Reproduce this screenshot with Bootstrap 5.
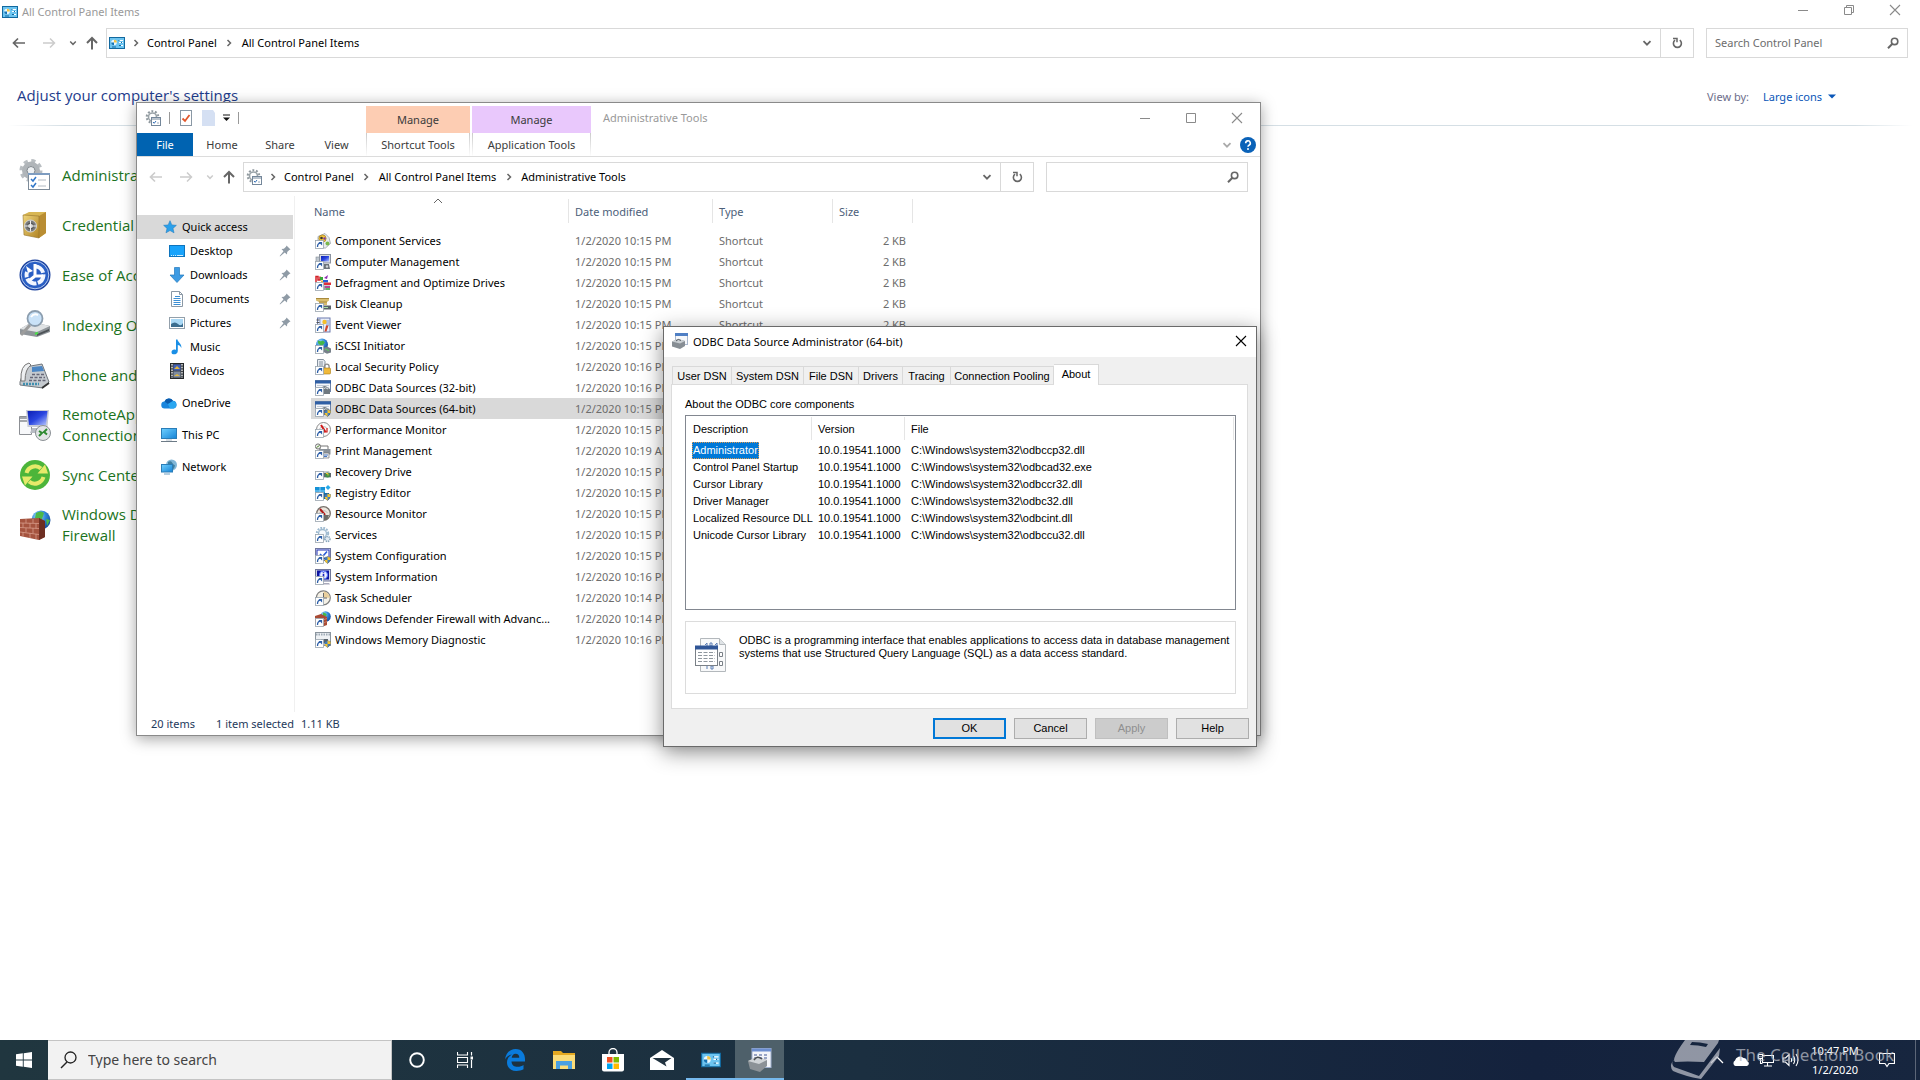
<!DOCTYPE html>
<html lang="en">
<head>
<meta charset="utf-8">
<meta name="viewport" content="width=device-width, initial-scale=1">
<title>All Control Panel Items</title>
<link href="https://cdn.jsdelivr.net/npm/bootstrap@5.3.0/dist/css/bootstrap.min.css" rel="stylesheet">
<style>
  :root { --ui: "Noto Sans", "Open Sans", sans-serif; --heading: "Open Sans", "Noto Sans", sans-serif; --classic: "Liberation Sans", Arial, sans-serif; }
  body { font-family: var(--ui); font-size: 11px; line-height: 16px; color: #000; background: #fff; overflow: hidden; }
  svg { display: block; flex: none; }
  a { text-decoration: none; color: inherit; }
  button { font: inherit; color: inherit; }
  .plain { border: 0; background: none; padding: 0; display: flex; align-items: center; justify-content: center; }
  .ic16 { width: 16px; height: 16px; }
  .ic32 { width: 32px; height: 32px; }

  /* shared window chrome */
  .cap-btn { width: 46px; height: 20px; color: #8a8a8a; }
  .addr { height: 30px; border: 1px solid #d9d9d9; background: #fff; padding-left: 2px; }
  .addr .crumb-sep { width: 25px; color: #666; display: flex; justify-content: center; }
  .addr svg + .crumb-sep { width: 22px; }
  .refresh { width: 33px; border-left: 1px solid #d9d9d9; color: #666; }
  .find { width: 202px; height: 30px; border: 1px solid #d9d9d9; padding: 0 8px; margin-left: 12px; }
  .find input { border: 0; outline: 0; padding: 0; background: none; min-width: 0; color: #6d6d6d; }
  .find input::placeholder { color: #6d6d6d; opacity: 1; }
  .navs { color: #666; }
  .nav-keys { gap: 13px; padding: 0 7px 0 12px; }
  .nav-keys .plain:nth-child(2) { margin-left: 3px; }
  .nav-keys .plain:last-child { margin-left: -5px; }
  .dim { color: #ccc; }

  /* control panel */
  .cp-title { height: 24px; color: #999; padding: 0 2px; }
  .cp-head { color: #1e3c8c; font-family: var(--heading); font-size: 15px; line-height: 20px; }
  .cp-bar { padding: 23px 0 0 17px; }
  .cp-rule { height: 1px; margin-top: 20px; background: linear-gradient(90deg, #fff, #d5dfe5 3%, #d5dfe5 97%, #fff); }
  .view-by { color: #6d6d8a; margin-right: 84px; gap: 0; }
  .view-by select { appearance: none; border: 0; background: none; color: #0a56b8; padding: 0; margin-left: 14px; font: inherit; width: 65px; }
  .cp-list { padding: 24px 0 0 19px; }
  .cp-item { height: 50px; gap: 11px; color: #1b7321; font-family: var(--heading); font-size: 15px; line-height: 21px; width: 220px; }

  /* explorer */
  .explorer { position: absolute; left: 136px; top: 102px; width: 1125px; height: 634px; background: #fff; border: 1px solid #8a8a8a; box-shadow: 0 3px 14px rgba(0,0,0,.36); }
  .caption-row { height: 30px; }
  .qat { width: 229px; padding-left: 8px; }
  .qat .vbar { width: 1px; height: 12px; background: #999; }
  .qat .doc { margin: 0 10px 0 2px; }
  .manage { height: 27px; align-self: flex-end; color: #3b3b3b; }
  .tint-short { background: #fdcdb3; } .tint-app { background: #e9c8fc; margin-left: 2px; }
  .w-short { width: 104px; } .w-app { width: 119px; }
  .ribbon { height: 24px; border-bottom: 1px solid #dcdcdc; color: #3b3b3b; }
  .ribbon a { display: flex; align-items: center; justify-content: center; width: 58px; }
  .ribbon a.file-tab { width: 56px; background: #0063b1; color: #fff; }
  .ribbon a.view-tab { width: 55px; margin-right: 2px; }
  .ribbon .ctx { border: solid; border-width: 0 1px; border-image: linear-gradient(#c8c8c8, #fff) 1; }
  .ribbon .ctx.w-short { width: 104px; } .ribbon .ctx.w-app { width: 119px; margin-left: 2px; }
  .addr-row { padding: 5px 12px 4px 0; }
  .side { width: 157px; padding-top: 19px; }
  .side a { height: 24px; display: flex; align-items: center; gap: 5px; padding-left: 24px; width: 156px; }
  .side a.sub { padding-left: 32px; padding-right: 2px; }
  .side a.top { margin-top: 8px; }
  .side a.here { background: #d9d9d9; padding-left: 26px; }
  .side-rule { width: 1px; background: #f0f0f0; margin-right: 16px; }
  .files { table-layout: fixed; width: 602px; border-collapse: separate; border-spacing: 0; margin-top: 3px; }
  .files th { height: 24px; font-weight: 400; color: #4c607a; border-right: 1px solid #e5e5e5; padding: 2px 6px 0; }
  .files th:first-child { padding-left: 3px; }
  .files td { height: 21px; padding: 0 7px 0 6px; color: #6d6d6d; white-space: nowrap; overflow: hidden; }
  .files td:first-child { color: #000; padding: 0 4px; }
  .files td:last-child { text-align: right; }
  .files .spacer td { height: 7px; }
  .files .picked td { background: #d9d9d9; }
  .sort { position: absolute; left: 296px; top: 95px; color: #666; }
  .status { height: 23px; padding-left: 14px; color: #1e395b; }
  .status span + span { margin-left: 21px; }
  .status span + span + span { margin-left: 7px; }

  /* odbc dialog */
  .odbc { position: absolute; left: 663px; top: 326px; width: 594px; height: 421px; background: #f0f0f0; border: 1px solid #6a6a6a; box-shadow: 0 5px 20px rgba(0,0,0,.45); font-family: var(--classic); font-size: 11px; line-height: 13px; }
  .odbc-title { height: 30px; background: #fff; font-family: var(--ui); padding: 0 9px 2px 8px; gap: 5px; }
  .odbc-body { padding: 7px 8px 0 7px; }
  .odbc-tabs { height: 20px; padding-left: 1px; }
  .odbc-tabs button { height: 18px; background: #f0f0f0; border: 1px solid #d9d9d9; border-width: 1px 1px 0 0; padding: 1px 0 0; }
  .odbc-tabs button:first-child { border-left-width: 1px; }
  .odbc-tabs button.active { height: 21px; margin-bottom: -1px; background: #fff; z-index: 1; padding: 0 0 2px; }
  .odbc-page { border: 1px solid #dcdcdc; background: #fff; padding: 13px 11px 14px 13px; height: 325px; }
  .odbc-page .caption { height: 17px; margin: 0; }
  .odbc-list { height: 195px; border: 1px solid #828790; padding: 1px; }
  .odbc-list table { table-layout: fixed; width: 547px; border-collapse: separate; border-spacing: 0; }
  .odbc-list th { font-weight: 400; height: 23px; border-right: 1px solid #e5e5e5; padding: 2px 6px 0; }
  .odbc-list td { height: 17px; padding: 0 0 0 6px; white-space: nowrap; }
  .odbc-list .spacer td { height: 2px; }
  .odbc-list .on { display: block; background: #0078d7; color: #fff; height: 17px; width: 67px; margin-left: -1px; padding: 2px 0 0 1px; outline: 1px dotted #e09a4f; outline-offset: -1px; }
  .odbc-note { height: 73px; border: 1px solid #dcdcdc; margin-top: 11px; padding: 12px 0 12px 9px; gap: 12px; }
  .odbc-note svg { margin-top: 4px; }
  .odbc-foot { gap: 8px; padding-top: 9px; margin-right: -1px; }
  .odbc-foot button { width: 73px; height: 21px; border: 1px solid #adadad; background: #e1e1e1; padding: 0; border-radius: 0; }
  .odbc-foot .primary { border: 2px solid #0078d7; }
  .odbc-foot button:disabled { background: #ccc; border-color: #bfbfbf; color: #8f8f8f; }

  /* taskbar */
  .tbar { height: 40px; background: linear-gradient(90deg, #20363f, #1b2f40 45%, #14223d 80%, #17263f); color: #fff; }
  .tbar .start { width: 48px; }
  .tbar .seek { width: 344px; background: #f2f2f2; border: 1px solid #c4c4c4; border-left: 0; padding-left: 12px; gap: 11px; color: #222; }
  .tbar .seek input { border: 0; outline: 0; background: none; padding: 0; font-size: 14px; }
  .tbar .seek input::placeholder { color: #444; opacity: 1; }
  .tbar .app { width: 49px; border-bottom: 2px solid transparent; padding-top: 2px; }
  .tbar .open { border-bottom-color: #76b9ed; }
  .tbar .front { background: #4e606a; }
  .tray { gap: 8px; padding-right: 4px; }
  .tray .clock { width: 56px; line-height: 19px; margin-right: 8px; }
  .tray .peek { width: 1px; height: 40px; background: #5c6678; margin-left: 12px; }
  .brand { position: absolute; right: 26px; bottom: 0; color: #b4b8c2; opacity: .75; height: 40px; font-size: 17px; pointer-events: none; gap: 14px; }
  .brand span { padding-bottom: 10px; }
</style>
<script src="https://cdn.jsdelivr.net/npm/bootstrap@5.3.0/dist/js/bootstrap.bundle.min.js"></script>
</head>
<body class="vh-100 d-flex flex-column position-relative">

<svg width="0" height="0" class="position-absolute" aria-hidden="true">
  <defs>
    <linearGradient id="gBlue" x1="0" y1="0" x2="1" y2="1"><stop offset="0" stop-color="#6fd0ff"/><stop offset="1" stop-color="#1583d6"/></linearGradient>
    <linearGradient id="gScr" x1="0" y1="0" x2="1" y2="1"><stop offset="0" stop-color="#0c1fb4"/><stop offset=".5" stop-color="#2a46e0"/><stop offset="1" stop-color="#b8c8ff"/></linearGradient>
    <linearGradient id="gGold" x1="0" y1="0" x2="1" y2="1"><stop offset="0" stop-color="#f0d67c"/><stop offset="1" stop-color="#b08324"/></linearGradient>
    <radialGradient id="gGlobe" cx=".35" cy=".3" r=".8"><stop offset="0" stop-color="#9fe0ff"/><stop offset=".5" stop-color="#2f86d8"/><stop offset="1" stop-color="#123f92"/></radialGradient>

    <symbol id="i-back" viewBox="0 0 14 14"><path d="M13 7H1.5M6 2.5 1.5 7 6 11.500" fill="none" stroke="currentColor" stroke-width="1.700"/></symbol>
    <symbol id="i-fwd" viewBox="0 0 14 14"><path d="M1 7h11.500M8 2.500 12.500 7 8 11.500" fill="none" stroke="currentColor" stroke-width="1.500"/></symbol>
    <symbol id="i-up" viewBox="0 0 14 14"><path d="M7 13.500V2M2 7l5-5 5 5" fill="none" stroke="currentColor" stroke-width="2"/></symbol>
    <symbol id="i-down" viewBox="0 0 10 10"><path d="M1.500 3.200 5 6.700 8.500 3.200" fill="none" stroke="currentColor" stroke-width="1.800"/></symbol>
    <symbol id="i-right" viewBox="0 0 8 8"><path d="M2.500 1 5.500 4 2.500 7" fill="none" stroke="currentColor" stroke-width="1.500"/></symbol>
    <symbol id="i-reload" viewBox="0 0 12 12"><path d="M8.800 3.200A4 4 0 1 1 4 3.200" fill="none" stroke="currentColor" stroke-width="1.600"/><path d="M2 1.500h4v3.700" fill="none" stroke="currentColor" stroke-width="1.500"/></symbol>
    <symbol id="i-find" viewBox="0 0 12 12"><circle cx="7.600" cy="4.400" r="3.200" fill="none" stroke="currentColor" stroke-width="1.600"/><path d="M5.400 6.800 1 11.200" stroke="currentColor" stroke-width="2"/></symbol>
    <symbol id="i-min" viewBox="0 0 12 12"><path d="M1 6.500h10" stroke="currentColor"/></symbol>
    <symbol id="i-max" viewBox="0 0 12 12"><path d="M1.500 1.500h9v9h-9z" fill="none" stroke="currentColor"/></symbol>
    <symbol id="i-restore" viewBox="0 0 12 12"><path d="M1.500 3.500h7v7h-7zM3.500 3.500v-2h7v7h-2" fill="none" stroke="currentColor"/></symbol>
    <symbol id="i-x" viewBox="0 0 12 12"><path d="M1 1l10 10M11 1 1 11" stroke="currentColor" stroke-width="1.100"/></symbol>
    <symbol id="i-cp" viewBox="0 0 16 12"><rect x=".5" y=".5" width="15" height="11" fill="#6cc4f0" stroke="#12699f"/><circle cx="5" cy="5.500" r="2.800" fill="#e8f7ff"/><path d="M5 5.500V2.700A2.800 2.800 0 0 1 7.800 5.500z" fill="#f5c542"/><path d="M5 5.500H2.200A2.800 2.800 0 0 0 5 8.300z" fill="#1374b5"/><path d="M10 3.500h4M10 5.500h4M10 8.500h4" stroke="#fff"/><path d="M9.500 3.500h1M12 5.500h1M10 8.500h2M3 10h4" stroke="#12699f"/></symbol>
    <symbol id="i-gear" viewBox="0 0 16 16"><circle cx="7.500" cy="7" r="5.800" fill="none" stroke="#8f989e" stroke-width="2" stroke-dasharray="1.900 1.744"/><circle cx="7.500" cy="7" r="4" fill="#fff" stroke="#9aa3a8" stroke-width="1.600"/><rect x="6.500" y="7.500" width="9" height="8" fill="#fff" stroke="#74879a"/><path d="M6.500 9h9" stroke="#74879a"/><path d="M8 12l1.200 1.300L11 11" fill="none" stroke="#2f6db5"/><path d="M12 13h2" stroke="#9ab"/></symbol>

    <symbol id="sc" viewBox="0 0 16 16"><rect x=".5" y="7.500" width="8" height="8" fill="#fff" stroke="#9aa5ae" stroke-width=".8"/><path d="M2.500 14c0-2.500 1-3.700 3-3.800" fill="none" stroke="#2b5ea8" stroke-width="1.300"/><path d="M3.500 9h3.600v3.600z" fill="#2b5ea8"/></symbol>
    <symbol id="shield" viewBox="0 0 16 16"><path d="M9.500 9.500q2-.2 3-1 1 .8 3 1 .3 4.500-3 6-3.300-1.500-3-6z" fill="#3f7fc4" stroke="#555" stroke-width=".5"/><path d="M12.500 8.500q1 .8 3 1l0 2.500h-3zM9.600 12h2.900v3.500q-2.500-1.200-2.900-3.500z" fill="#f4c430"/></symbol>
    <symbol id="f-comp" viewBox="0 0 16 16"><path d="M3 3.500 10 .5l4 4 1.500 6-5 4.500H3z" fill="#e8ebee" stroke="#8e969c" stroke-width=".7"/><circle cx="7.500" cy="5.500" r="3.600" fill="#f3c63a" stroke="#a57c11" stroke-width=".7"/><circle cx="6.500" cy="5" r="1.300" fill="#333"/><circle cx="9.500" cy="5.500" r="1.200" fill="#7b3ba8"/><circle cx="12.500" cy="10.500" r="2" fill="#79b84c"/><use href="#sc"/></symbol>
    <symbol id="f-mgmt" viewBox="0 0 16 16"><rect x="1" y="3" width="5" height="8" fill="#bfc7cf" stroke="#818b95" stroke-width=".6"/><rect x="4.500" y=".5" width="11" height="8.500" fill="#d8dce2" stroke="#8b93a0"/><rect x="6" y="2" width="8" height="5.500" fill="url(#gScr)"/><path d="M9 10h5l1 5H9z" fill="#6b737a"/><circle cx="12" cy="12.500" r="1.200" fill="#cfd4d8"/><use href="#sc"/></symbol>
    <symbol id="f-frag" viewBox="0 0 16 16"><path d="M1 7V1.500h2V5h2V1.500" fill="none" stroke="#d42027" stroke-width="1.500"/><path d="M5 2h3v3H5z" fill="#38a838"/><path d="M9 3l4-3-1 4z" fill="#8d2bb0"/><path d="M8 5h5v2.500H8z" fill="#2460d8"/><path d="M9 7.500h7V10H9z" fill="#e0303a"/><path d="M9 10.500h6V15H9z" fill="#9aa0a6"/><path d="M10 12h5" stroke="#c02b8c" stroke-width="1.500"/><path d="M11 14h4" stroke="#3bbf3b" stroke-width="1.200"/><path d="M6 5.500h2v2H6z" fill="#f1b637"/><use href="#sc"/></symbol>
    <symbol id="f-clean" viewBox="0 0 16 16"><path d="M1 2h13v2.500L12 6v3H4V6L1 4.500z" fill="#d9bd6e"/><path d="M1 2.500h13M4 6h8" stroke="#a98a3d"/><path d="M7 9.500h9v4H7z" fill="#5a6268"/><path d="M8 11.500h5" stroke="#a8e0a0"/><use href="#sc"/></symbol>
    <symbol id="f-event" viewBox="0 0 16 16"><rect x="2.500" y="1" width="12.500" height="14" fill="#e8eefb" stroke="#6c7bae"/><path d="M5 1v14" stroke="#8fa0cf"/><path d="M1.500 3h3M1.500 5.500h3" stroke="#555"/><path d="M8 4h6M11 6h3M11 8h3" stroke="#7d93cc"/><circle cx="9.500" cy="5" r="2.200" fill="#f4bf2a"/><path d="M11 8.500h2.500l-2 6H9.500z" fill="#d1452b"/><use href="#sc"/></symbol>
    <symbol id="f-iscsi" viewBox="0 0 16 16"><circle cx="7" cy="6.500" r="6" fill="url(#gGlobe)"/><path d="M3 2.500q3 1.500 5 0l2 2q-2 3.500-5 2.500-2.500-1-2-4.500z" fill="#43b649"/><path d="M8 10l4-1.500 4 2v4l-4 1.300-4-2z" fill="#77808a"/><path d="M10 11l4 1.500" stroke="#5bd35b"/><use href="#sc"/></symbol>
    <symbol id="f-sec" viewBox="0 0 16 16"><path d="M2.500.500h6l1.500 2v7H2.500z" fill="#e9edf2" stroke="#8592a0"/><path d="M4 3h4M4 5h4M4 7h4" stroke="#8592a0"/><path d="M9.500 9V7.500a2.300 2.300 0 0 1 4.600 0V9" fill="none" stroke="#8d8d8d" stroke-width="1.300"/><rect x="8" y="9" width="7.500" height="6" rx="1" fill="#f0b93a" stroke="#a97b13" stroke-width=".6"/><use href="#sc"/></symbol>
    <symbol id="f-odbc" viewBox="0 0 16 16"><rect x=".5" y=".5" width="15" height="11" fill="#f5f7fa" stroke="#6d83a8"/><path d="M0 2h16" stroke="#2f5fa5" stroke-width="3"/><path d="M2 5.500h12M2 7.500h12" stroke="#c2cbd8"/><path d="M6 8q4-4 7 0l2 1v5H8z" fill="#6f787f"/><path d="M8 9q3-2.500 5 0" fill="none" stroke="#e3e6e9"/></symbol>
    <symbol id="f-odbcsc" viewBox="0 0 16 16"><use href="#f-odbc"/><use href="#sc"/></symbol>
    <symbol id="f-odbcsh" viewBox="0 0 16 16"><use href="#f-odbc"/><use href="#shield"/><use href="#sc"/></symbol>
    <symbol id="f-box" viewBox="0 0 16 16"><rect x="3.500" y=".5" width="12" height="11" fill="#f5f7fa" stroke="#a9b6cc"/><path d="M3 1.500h13" stroke="#4f7fc4" stroke-width="3"/><path d="M0 8.500 6 6l7 2v5l-5 3-8-2.500z" fill="#878e94"/><path d="M0 8.500 6 6l7 2-5 2.500z" fill="#c9ced2"/><path d="M4 8q2-3 5-.5" fill="none" stroke="#555c62"/></symbol>
    <symbol id="f-perf" viewBox="0 0 16 16"><circle cx="8.500" cy="7.500" r="7" fill="#fbfbfb" stroke="#8b8b8b"/><path d="M4.500 7a4.500 4.500 0 0 1 8 0" fill="none" stroke="#bbb"/><path d="M6 3 10.500 10" stroke="#d01818" stroke-width="2"/><path d="M12 6v4h-3" fill="none" stroke="#d01818" stroke-width="1.200"/><use href="#sc"/></symbol>
    <symbol id="f-res" viewBox="0 0 16 16"><circle cx="8.500" cy="7.500" r="6.800" fill="#ece6dd" stroke="#77716a" stroke-width="1.300"/><path d="M4.500 7a4.500 4.500 0 0 1 8 0" fill="none" stroke="#bbb"/><path d="M5 3 10 9" stroke="#b01818" stroke-width="2"/><path d="M9 9h5l-2 5H9z" fill="#6d6a66"/><use href="#sc"/></symbol>
    <symbol id="f-print" viewBox="0 0 16 16"><path d="M5 3h8v4H5z" fill="#fff" stroke="#777"/><path d="M4 6h11.500v5.500H4z" fill="#8b9299"/><path d="M8 10h6v5H8z" fill="#f3f3f3" stroke="#777" stroke-width=".7"/><path d="M9 12h4M9 13.500h3" stroke="#4a78c0"/><circle cx="3" cy="3.500" r="2.600" fill="#eee" stroke="#777"/><path d="M1.500 4.500l3-2" stroke="#4f8a2a"/><use href="#sc"/></symbol>
    <symbol id="f-recov" viewBox="0 0 16 16"><path d="M2 7h12l2 3v4H0v-4z" fill="#c6cbd0"/><path d="M7 9h9v4H7z" fill="#5f676e"/><circle cx="12.500" cy="11" r="2.500" fill="#3f8f48"/><path d="M11 9.500h2v2" stroke="#f4c430" fill="none"/><use href="#sc"/></symbol>
    <symbol id="f-reg" viewBox="0 0 16 16"><path d="M0 2h10v8H0z" fill="#1591d6"/><path d="M5 2v8M0 6h10" stroke="#8ed0f5"/><path d="M13 0l2.500 2.500L13 5l-2.500-2.500z" fill="#27a9e8"/><path d="M8 8h6v6H8z" fill="#0c6fb0"/><use href="#shield"/><use href="#sc"/></symbol>
    <symbol id="f-serv" viewBox="0 0 16 16"><circle cx="7.500" cy="6.500" r="5.700" fill="none" stroke="#9db9cf" stroke-width="2" stroke-dasharray="1.800 1.200"/><circle cx="7.500" cy="6.500" r="4" fill="#f4f8fb" stroke="#9db9cf" stroke-width="1.300"/><circle cx="12.500" cy="12" r="2.500" fill="#e1ebf2" stroke="#8aa6bc" stroke-width="1.500" stroke-dasharray="1.300 .8"/><use href="#sc"/></symbol>
    <symbol id="f-conf" viewBox="0 0 16 16"><rect x=".5" y=".5" width="15" height="12" fill="#dfe2f0" stroke="#6f76a0"/><rect x="2" y="2" width="12" height="8.500" fill="#fff" stroke="#2233b5"/><path d="M5 6l2.500 2.500L12 3.500" fill="none" stroke="#2a5bd7" stroke-width="1.600"/><use href="#shield"/><use href="#sc"/></symbol>
    <symbol id="f-info" viewBox="0 0 16 16"><rect x=".5" y=".5" width="15" height="11.500" fill="#cfd3e2" stroke="#70779a"/><rect x="2" y="1.500" width="12" height="9" fill="#0d14a0"/><circle cx="8.500" cy="6" r="4" fill="#eef2ff" stroke="#5b79ff"/><path d="M8.500 3.200v1M8.500 5v3.500" stroke="#1420c0" stroke-width="1.600"/><path d="M8 14h6l1 1.500H8z" fill="#aab"/><use href="#sc"/></symbol>
    <symbol id="f-task" viewBox="0 0 16 16"><circle cx="8.300" cy="7.800" r="7" fill="#f5f1e6" stroke="#7f7f7f" stroke-width="1.200"/><path d="M8.500 7.800V1.500A6.300 6.300 0 0 1 14.600 7.800z" fill="#e9cf9c"/><path d="M8.500 3v5H12" fill="none" stroke="#666"/><use href="#sc"/></symbol>
    <symbol id="f-wall" viewBox="0 0 16 16"><circle cx="10.500" cy="5.500" r="5.300" fill="url(#gGlobe)"/><path d="M8 1.500q3 0 4 2.500-2 2-4 1z" fill="#46b84a"/><path d="M0 5l6-2 6 3v8l-4 1.500-8-2z" fill="#a94b34"/><path d="M1 7.500l7 1.500 4-1.500M1 10.500l7 1.500 4-1.500" fill="none" stroke="#d99a85" stroke-width=".6"/><use href="#sc"/></symbol>
    <symbol id="f-mem" viewBox="0 0 16 16"><rect x=".5" y=".5" width="15" height="13" fill="#eef1f4" stroke="#8b959e"/><path d="M1 2.500h14" stroke="#9fabb6" stroke-width="2" stroke-dasharray="1.500 1"/><path d="M6 7h7v4H6z" fill="#59636b"/><use href="#shield"/><use href="#sc"/></symbol>

    <symbol id="s-star" viewBox="0 0 16 16"><path d="M8 .8l2.100 4.800 5.200.5-3.900 3.500 1.200 5.100L8 12l-4.600 2.700 1.200-5.100L.7 6.100l5.200-.5z" fill="#2ba0ea" stroke="#1a78bd" stroke-width=".6"/></symbol>
    <symbol id="s-desk" viewBox="0 0 16 16"><rect x=".5" y="2.500" width="15" height="11" fill="#18a3fb" stroke="#0e74bd"/><path d="M2 12.500h1M4 12.500h1M6 12.500h1M8 12.500h6" stroke="#fff" stroke-width=".8"/></symbol>
    <symbol id="s-dl" viewBox="0 0 16 16"><path d="M5.500.500h5v7.500h4.500L8 15.500 1 8h4.500z" fill="#3d9be3" stroke="#2178bd" stroke-width=".7"/></symbol>
    <symbol id="s-doc" viewBox="0 0 16 16"><path d="M2.500.500h8l3 3v12h-11z" fill="#fff" stroke="#8a98a5"/><path d="M10.500.500v3h3" fill="none" stroke="#8a98a5"/><path d="M4.500 7.500h7M4.500 9.500h7M4.500 11.500h7M4.500 13.500h7M6 5.500h5" stroke="#3c8fd4"/></symbol>
    <symbol id="s-pic" viewBox="0 0 16 16"><rect x=".5" y="2.500" width="15" height="11" fill="#fff" stroke="#93a0ab"/><rect x="2" y="4" width="12" height="8" fill="#a9d8f5"/><path d="M2 9q4-3 7 0t5-1v4H2z" fill="#3b6d8f"/></symbol>
    <symbol id="s-mus" viewBox="0 0 16 16"><path d="M7 .5h1.500c.3 3 4.500 4 3.800 8.500-.8-2-2-2.800-3.500-3V12c0 4-6.300 4.500-6.300 1.200C2.500 11 5 10 7 11z" fill="#1a8fe6"/></symbol>
    <symbol id="s-vid" viewBox="0 0 16 16"><rect x="1.500" y=".5" width="13" height="15" fill="#3e4348" stroke="#23272a"/><path d="M3 1v14M13 1v14" stroke="#fff" stroke-width="1.200" stroke-dasharray="1.500 1.200"/><rect x="4.500" y="1.500" width="7" height="6" fill="#3f5fb8"/><rect x="4.500" y="8.500" width="7" height="6" fill="#7d8ba0"/><path d="M5 6l3-3 3 3zM5 13l3-2 3 2z" fill="#e0b640"/></symbol>
    <symbol id="s-one" viewBox="0 0 16 16"><path d="M4 13.500a3.500 3.500 0 0 1-.5-7A4.800 4.800 0 0 1 12 5.800a3.900 3.900 0 0 1 .5 7.700z" fill="#1a86dd"/><path d="M3.500 6.500A4.800 4.800 0 0 1 12 5.800L7 9z" fill="#0b5cad"/><path d="M12 5.900a3.900 3.900 0 0 1 .5 7.600H9L7 9z" fill="#2aa6f0"/></symbol>
    <symbol id="s-pc" viewBox="0 0 16 16"><rect x=".5" y="1.500" width="15" height="10" fill="url(#gBlue)" stroke="#2a7db8"/><path d="M0 14.500h16" stroke="#6c7a86"/><path d="M5 13h6" stroke="#b3c0ca"/></symbol>
    <symbol id="s-net" viewBox="0 0 16 16"><circle cx="10.500" cy="6" r="5.500" fill="#7fb6d8"/><path d="M7 3q3-1.500 4 .5t3 3q-1 4-3 4-1-4-4-4z" fill="#3f7f9f"/><rect x=".5" y="5.500" width="11" height="7.500" fill="url(#gBlue)" stroke="#2a7db8"/><path d="M3 15h6" stroke="#6c9ec2"/></symbol>
    <symbol id="s-pin" viewBox="0 0 12 12"><path d="M7.500.500 11.500 4.500 10.300 5 8.200 7.100 8 9.500 5.700 7.500 1 11.500.700 11 4.500 6.300 2.500 4l2.400-.2L7 1.700z" fill="#8f9ba6"/></symbol>

    <symbol id="c-adm" viewBox="0 0 32 32"><circle cx="12" cy="11.500" r="9.500" fill="none" stroke="#b9bec2" stroke-width="4" stroke-dasharray="4 3.460"/><circle cx="12" cy="11.500" r="6.500" fill="#f1f3f4" stroke="#b0b5b9" stroke-width="5"/><circle cx="12" cy="11.500" r="4" fill="#eef1f3" stroke="#7f868c"/><rect x="9.500" y="14.500" width="21" height="16" fill="#fff" stroke="#7d8b99"/><path d="M9 15h22" stroke="#7d9cc0" stroke-width="2"/><path d="M12 20l2 2 3-4M12 26l2 2 3-4" fill="none" stroke="#3277c8" stroke-width="1.500"/><path d="M19 21h8M19 27h8" stroke="#b2bac2"/></symbol>
    <symbol id="c-cred" viewBox="0 0 32 32"><path d="M4 6 10 3h17v21l-7 5z" fill="#d8b653"/><path d="M20 7l7-4v21l-7 5z" fill="#b98d33"/><path d="M4 6l16 1v22L5 26z" fill="url(#gGold)" stroke="#93722b" stroke-width=".6"/><circle cx="11.500" cy="17" r="6" fill="#77797a" stroke="#d6d6d6"/><circle cx="11.500" cy="17" r="3" fill="#c3c6c8" stroke="#444"/><path d="M11.500 11.500v11M6 17h11" stroke="#eee"/></symbol>
    <symbol id="c-ease" viewBox="0 0 32 32"><circle cx="16" cy="16" r="15.500" fill="#1d439f"/><circle cx="16" cy="16" r="13.800" fill="#2a5fc4" stroke="#b9cdf2"/><path d="M16 7.500A8.500 8.500 0 1 1 8 13" fill="none" stroke="#f2f6ff" stroke-width="4" stroke-dasharray="11 1.500"/><path d="M16 5v12h8M16 17l-5 4" fill="none" stroke="#fff" stroke-width="3"/><path d="M7 7l7 5-5 2z" fill="#fff"/></symbol>
    <symbol id="c-index" viewBox="0 0 32 32"><path d="M1 20 13 13l18 4v6l-13 5L1 25z" fill="#8e9499"/><path d="M1 20 13 13l18 4-13 6z" fill="#dfe2e4"/><path d="M18 25l12-5v2l-12 5z" fill="#4d5357"/><path d="M16 25l3-1.200" stroke="#4ade4a" stroke-width="2"/><path d="M11 16 2 26" stroke="#9c9c9c" stroke-width="3"/><circle cx="16" cy="9.500" r="7.500" fill="#c9e2f8" stroke="#8b9dae" stroke-width="1.800"/><path d="M12 8q3-4 7-2" fill="none" stroke="#fff" stroke-width="2"/></symbol>
    <symbol id="c-phone" viewBox="0 0 32 32"><path d="M1 23 6 8l17-3 7 18-6 6-23-3z" fill="#c5cacf" stroke="#70777d"/><path d="M13 8l10-1 2 5-12 1z" fill="#4b86c4"/><path d="M13 15.500h12M11 18.500h15M10 21.500h17" stroke="#667" stroke-width="1.500" stroke-dasharray="3 1.500"/><path d="M2 22Q1 6 10 4l2 2q-6 4-6 16z" fill="#eef0f2" stroke="#777"/><path d="M4 25h16" stroke="#3f8fb0" stroke-width="2.500" stroke-dasharray="2 1"/><path d="M23 29l7-5" stroke="#333" stroke-width="2"/></symbol>
    <symbol id="c-remote" viewBox="0 0 32 32"><path d="M.5 7.500h12v18H.5z" fill="#f7f8fa" stroke="#8c8f94"/><path d="M1 9h11M1 12h8" stroke="#4e545c"/><path d="M7 1h23l-1.500 17H8.500z" fill="#c9ccd6"/><path d="M8.500 2h20l-1.500 14H10z" fill="url(#gScr)"/><path d="M13 19h9l2 5H11z" fill="#b8bcc4"/><circle cx="24" cy="24" r="7.500" fill="#e2e5e7" stroke="#8a9094"/><path d="M20 22l3 2-3 3M28 20l-3 3 3 2.500" fill="none" stroke="#2e8a32" stroke-width="2"/></symbol>
    <symbol id="c-sync" viewBox="0 0 32 32"><circle cx="16" cy="16" r="15" fill="#4cb53a"/><path d="M7.500 14A9 9 0 0 1 22 9.500M24.500 18A9 9 0 0 1 10 22.500" fill="none" stroke="#e6ea6a" stroke-width="4"/><path d="M18.500 14.500h10.500l-3-9zM3 17.500h10.500L6 26.500z" fill="#e6ea6a"/></symbol>
    <symbol id="c-wall" viewBox="0 0 32 32"><circle cx="22" cy="11" r="9.500" fill="url(#gGlobe)"/><path d="M17 4q5-3 8 0l-2 6q-5 2-7-1zM27 10l4 1-3 6z" fill="#4cb848"/><path d="M1 10l19-1 6 3v16l-6 3-19-4z" fill="#a5543f"/><path d="M20 9l6 3v16l-6 3z" fill="#6e2f22"/><path d="M1 14l19 .500M1 18.500l19 1M1 23l19 2.500M7 10v4M14 10v4M4 14v4.500M11 14v5M17 14.500v5M7 19v4.500M14 19v5.500M4 23v4.500M11 24v5M17 25v5" stroke="#d79c8a" stroke-width=".8"/></symbol>
    <symbol id="d-odbc" viewBox="0 0 32 34"><path d="M5.500.500h19l6 6v27h-25z" fill="#f8f9fa" stroke="#b3b8bc"/><path d="M24.500.500v6h6" fill="#dfe3e6" stroke="#b3b8bc"/><path d="M10 7l2-2v3M15 5h2v3h-2zM20 7l2-2v3M12 28v3M16 28h2v3h-2z" fill="none" stroke="#5c7fb5"/><path d="M24.500 14.500h3v4h-3zM24.500 23.500h3v4h-3z" fill="#fff" stroke="#7a8087"/><rect x=".5" y="8.500" width="22" height="19" fill="#fff" stroke="#7a8087"/><path d="M0 9.500h23" stroke="#2f5596" stroke-width="4"/><path d="M3 14.500h17M3 17.500h17M3 20.500h17M3 23.500h17" stroke="#8f979e" stroke-dasharray="4 1.500"/></symbol>
  </defs>
</svg>

<!-- Control Panel window -->
<main class="flex-grow-1 overflow-hidden">
  <header class="cp-title d-flex align-items-start">
    <div class="d-flex align-items-center gap-1 pt-1 flex-grow-1"><svg width="16" height="12"><use href="#i-cp"/></svg><span>All Control Panel Items</span></div>
    <button class="plain cap-btn" aria-label="Minimize"><svg width="12" height="12"><use href="#i-min"/></svg></button>
    <button class="plain cap-btn" aria-label="Restore"><svg width="12" height="12"><use href="#i-restore"/></svg></button>
    <button class="plain cap-btn" aria-label="Close"><svg width="12" height="12"><use href="#i-x"/></svg></button>
  </header>
  <div class="d-flex align-items-center pt-1 pe-2">
    <div class="navs nav-keys d-flex align-items-center">
      <button class="plain" aria-label="Back"><svg width="14" height="14"><use href="#i-back"/></svg></button>
      <button class="plain dim" aria-label="Forward"><svg width="14" height="14"><use href="#i-fwd"/></svg></button>
      <button class="plain" aria-label="Recent"><svg width="8" height="8"><use href="#i-down"/></svg></button>
      <button class="plain" aria-label="Up"><svg width="14" height="14"><use href="#i-up"/></svg></button>
    </div>
    <nav class="addr d-flex align-items-center flex-grow-1" aria-label="Address">
      <svg width="16" height="12"><use href="#i-cp"/></svg>
      <span class="crumb-sep"><svg width="8" height="8"><use href="#i-right"/></svg></span><a href="#">Control Panel</a>
      <span class="crumb-sep"><svg width="8" height="8"><use href="#i-right"/></svg></span><a href="#">All Control Panel Items</a>
      <button class="plain ms-auto me-1 px-1 navs" aria-label="Previous locations"><svg width="10" height="10"><use href="#i-down"/></svg></button>
      <button class="plain refresh h-100" aria-label="Refresh"><svg width="12" height="12"><use href="#i-reload"/></svg></button>
    </nav>
    <label class="find d-flex align-items-center me-1"><input class="flex-grow-1" type="search" placeholder="Search Control Panel" aria-label="Search Control Panel"><span class="navs"><svg width="12" height="12"><use href="#i-find"/></svg></span></label>
  </div>
  <div class="cp-bar d-flex justify-content-between align-items-center">
    <h1 class="cp-head mb-0 mt-1">Adjust your computer's settings</h1>
    <label class="view-by d-flex align-items-center mt-2">View by:
      <select aria-label="View by"><option>Large icons</option></select>
      <svg width="8" height="8"><path d="M0 1.500h8L4 5.500z" fill="#0a56b8"/></svg></label>
  </div>
  <div class="cp-rule mx-2"></div>
  <nav class="cp-list" aria-label="Control Panel items">
    <a class="cp-item d-flex align-items-center" href="#"><svg class="ic32"><use href="#c-adm"/></svg>Administrative Tools</a>
    <a class="cp-item d-flex align-items-center" href="#"><svg class="ic32"><use href="#c-cred"/></svg>Credential Manager</a>
    <a class="cp-item d-flex align-items-center" href="#"><svg class="ic32"><use href="#c-ease"/></svg>Ease of Access Center</a>
    <a class="cp-item d-flex align-items-center" href="#"><svg class="ic32"><use href="#c-index"/></svg>Indexing Options</a>
    <a class="cp-item d-flex align-items-center" href="#"><svg class="ic32"><use href="#c-phone"/></svg>Phone and Modem</a>
    <a class="cp-item d-flex align-items-center" href="#"><svg class="ic32"><use href="#c-remote"/></svg>RemoteApp and Desktop Connections</a>
    <a class="cp-item d-flex align-items-center" href="#"><svg class="ic32"><use href="#c-sync"/></svg>Sync Center</a>
    <a class="cp-item d-flex align-items-center" href="#"><svg class="ic32"><use href="#c-wall"/></svg>Windows Defender Firewall</a>
  </nav>
</main>

<!-- Administrative Tools window -->
<section class="explorer d-flex flex-column" aria-label="Administrative Tools">
  <header class="caption-row d-flex align-items-center">
    <div class="qat d-flex align-items-center">
      <svg class="ic16"><use href="#i-gear"/></svg><span class="vbar ms-2 me-2"></span>
      <button class="plain doc" aria-label="Properties"><svg width="12" height="16"><rect x=".5" y=".5" width="11" height="15" fill="#fff" stroke="#8a98a5"/><path d="M2.500 8.500l2.500 2.500L9.500 5" fill="none" stroke="#e2572b" stroke-width="1.800"/></svg></button>
      <button class="plain me-2" aria-label="New folder"><svg width="13" height="16"><path d="M0 0h11l2 3v13H0z" fill="#d5e0f3"/></svg></button>
      <button class="plain me-2" aria-label="Customize"><svg width="7" height="8"><path d="M0 1h7" stroke="#111"/><path d="M0 3.500h7L3.500 7z" fill="#111"/></svg></button>
      <span class="vbar"></span>
    </div>
    <div class="manage tint-short w-short d-flex align-items-center justify-content-center">Manage</div>
    <div class="manage tint-app w-app d-flex align-items-center justify-content-center">Manage</div>
    <span class="ms-2 ps-1 flex-grow-1" style="color:#999">Administrative Tools</span>
    <button class="plain cap-btn" aria-label="Minimize"><svg width="12" height="12"><use href="#i-min"/></svg></button>
    <button class="plain cap-btn" aria-label="Maximize"><svg width="12" height="12"><use href="#i-max"/></svg></button>
    <button class="plain cap-btn" aria-label="Close"><svg width="12" height="12"><use href="#i-x"/></svg></button>
  </header>
  <nav class="ribbon d-flex" aria-label="Ribbon">
    <a href="#" class="file-tab">File</a>
    <a href="#">Home</a><a href="#">Share</a><a href="#" class="view-tab">View</a>
    <a href="#" class="ctx w-short">Shortcut Tools</a>
    <a href="#" class="ctx w-app">Application Tools</a>
    <button class="plain ms-auto me-2" style="color:#aaa" aria-label="Expand ribbon"><svg width="10" height="10"><use href="#i-down"/></svg></button>
    <button class="plain me-1" aria-label="Help"><svg width="16" height="16"><circle cx="8" cy="8" r="8" fill="#0a62b8"/><path d="M5.700 6.200a2.300 2.300 0 1 1 3.300 2q-1 .5-1 1.600" fill="none" stroke="#fff" stroke-width="1.600"/><circle cx="8" cy="12" r="1" fill="#fff"/></svg></button>
  </nav>
  <div class="addr-row d-flex align-items-center">
    <div class="navs nav-keys d-flex align-items-center">
      <button class="plain dim" aria-label="Back"><svg width="14" height="14"><use href="#i-back"/></svg></button>
      <button class="plain dim" aria-label="Forward"><svg width="14" height="14"><use href="#i-fwd"/></svg></button>
      <button class="plain dim" aria-label="Recent"><svg width="8" height="8"><use href="#i-down"/></svg></button>
      <button class="plain" aria-label="Up"><svg width="14" height="14"><use href="#i-up"/></svg></button>
    </div>
    <nav class="addr d-flex align-items-center flex-grow-1" aria-label="Address">
      <svg class="ic16"><use href="#i-gear"/></svg>
      <span class="crumb-sep"><svg width="8" height="8"><use href="#i-right"/></svg></span><a href="#">Control Panel</a>
      <span class="crumb-sep"><svg width="8" height="8"><use href="#i-right"/></svg></span><a href="#">All Control Panel Items</a>
      <span class="crumb-sep"><svg width="8" height="8"><use href="#i-right"/></svg></span><a href="#">Administrative Tools</a>
      <button class="plain ms-auto me-1 px-1 navs" aria-label="Previous locations"><svg width="10" height="10"><use href="#i-down"/></svg></button>
      <button class="plain refresh h-100" aria-label="Refresh"><svg width="12" height="12"><use href="#i-reload"/></svg></button>
    </nav>
    <label class="find d-flex align-items-center"><input class="flex-grow-1" type="search" aria-label="Search Administrative Tools"><span class="navs"><svg width="12" height="12"><use href="#i-find"/></svg></span></label>
  </div>
  <div class="d-flex flex-grow-1">
    <nav class="side" aria-label="Folders">
      <a class="here" href="#"><svg width="14" height="14"><use href="#s-star"/></svg>Quick access</a>
      <a class="sub" href="#"><svg class="ic16"><use href="#s-desk"/></svg>Desktop<svg class="ms-auto" width="12" height="12"><use href="#s-pin"/></svg></a>
      <a class="sub" href="#"><svg class="ic16"><use href="#s-dl"/></svg>Downloads<svg class="ms-auto" width="12" height="12"><use href="#s-pin"/></svg></a>
      <a class="sub" href="#"><svg class="ic16"><use href="#s-doc"/></svg>Documents<svg class="ms-auto" width="12" height="12"><use href="#s-pin"/></svg></a>
      <a class="sub" href="#"><svg class="ic16"><use href="#s-pic"/></svg>Pictures<svg class="ms-auto" width="12" height="12"><use href="#s-pin"/></svg></a>
      <a class="sub" href="#"><svg class="ic16"><use href="#s-mus"/></svg>Music</a>
      <a class="sub" href="#"><svg class="ic16"><use href="#s-vid"/></svg>Videos</a>
      <a class="top" href="#"><svg class="ic16"><use href="#s-one"/></svg>OneDrive</a>
      <a class="top" href="#"><svg class="ic16"><use href="#s-pc"/></svg>This PC</a>
      <a class="top" href="#"><svg class="ic16"><use href="#s-net"/></svg>Network</a>
    </nav>
    <div class="side-rule"></div>
    <div>
      <table class="files">
        <colgroup><col style="width:258px"><col style="width:144px"><col style="width:120px"><col style="width:80px"></colgroup>
        <thead><tr><th scope="col">Name</th><th scope="col">Date modified</th><th scope="col">Type</th><th scope="col">Size</th></tr></thead>
        <tbody id="rows">
          <tr class="spacer" aria-hidden="true"><td colspan="4"></td></tr>
        </tbody>
      </table>
    </div>
  </div>
  <svg class="sort" width="10" height="6" aria-hidden="true"><path d="M1 5l4-4 4 4" fill="none" stroke="currentColor"/></svg>
  <footer class="status d-flex align-items-center"><span>20 items</span><span>1 item selected</span><span>1.11 KB</span></footer>
</section>
<script>
  const files = [
    ['comp', 'Component Services', '10:15 PM'], ['mgmt', 'Computer Management', '10:15 PM'],
    ['frag', 'Defragment and Optimize Drives', '10:15 PM'], ['clean', 'Disk Cleanup', '10:15 PM'],
    ['event', 'Event Viewer', '10:15 PM'], ['iscsi', 'iSCSI Initiator', '10:15 PM'],
    ['sec', 'Local Security Policy', '10:16 PM'], ['odbcsc', 'ODBC Data Sources (32-bit)', '10:16 PM'],
    ['odbcsh', 'ODBC Data Sources (64-bit)', '10:15 PM'], ['perf', 'Performance Monitor', '10:15 PM'],
    ['print', 'Print Management', '10:19 AM'], ['recov', 'Recovery Drive', '10:15 PM'],
    ['reg', 'Registry Editor', '10:15 PM'], ['res', 'Resource Monitor', '10:15 PM'],
    ['serv', 'Services', '10:15 PM'], ['conf', 'System Configuration', '10:15 PM'],
    ['info', 'System Information', '10:16 PM'], ['task', 'Task Scheduler', '10:14 PM'],
    ['wall', 'Windows Defender Firewall with Advanc...', '10:14 PM'], ['mem', 'Windows Memory Diagnostic', '10:16 PM']
  ];
  document.getElementById('rows').insertAdjacentHTML('beforeend', files.map(([icon, name, time], i) =>
    `<tr class="${i === 8 ? 'picked' : ''}"><td><div class="d-flex align-items-center gap-1"><svg class="ic16"><use href="#f-${icon}"/></svg>${name}</div></td><td>1/2/2020 ${time}</td><td>Shortcut</td><td>2 KB</td></tr>`).join(''));
</script>

<!-- ODBC dialog -->
<section class="odbc" role="dialog" aria-labelledby="odbcName">
  <header class="odbc-title d-flex align-items-center">
    <svg class="ic16"><use href="#f-box"/></svg><span id="odbcName" class="flex-grow-1">ODBC Data Source Administrator (64-bit)</span>
    <button class="plain text-black" aria-label="Close"><svg width="12" height="12"><use href="#i-x"/></svg></button>
  </header>
  <div class="odbc-body">
    <div class="odbc-tabs d-flex align-items-end" role="tablist">
      <button role="tab" style="width:60px">User DSN</button><button role="tab" style="width:72px">System DSN</button><button role="tab" style="width:55px">File DSN</button><button role="tab" style="width:44px">Drivers</button><button role="tab" style="width:48px">Tracing</button><button role="tab" style="width:103px">Connection Pooling</button><button role="tab" class="active" style="width:45px" aria-selected="true">About</button>
    </div>
    <div class="odbc-page" role="tabpanel">
      <p class="caption">About the ODBC core components</p>
      <div class="odbc-list">
        <table>
          <colgroup><col style="width:125px"><col style="width:93px"><col></colgroup>
          <thead><tr><th scope="col">Description</th><th scope="col">Version</th><th scope="col">File</th></tr></thead>
          <tbody>
            <tr class="spacer" aria-hidden="true"><td colspan="3"></td></tr>
            <tr><td><span class="on">Administrator</span></td><td>10.0.19541.1000</td><td>C:\Windows\system32\odbccp32.dll</td></tr>
            <tr><td>Control Panel Startup</td><td>10.0.19541.1000</td><td>C:\Windows\system32\odbcad32.exe</td></tr>
            <tr><td>Cursor Library</td><td>10.0.19541.1000</td><td>C:\Windows\system32\odbccr32.dll</td></tr>
            <tr><td>Driver Manager</td><td>10.0.19541.1000</td><td>C:\Windows\system32\odbc32.dll</td></tr>
            <tr><td>Localized Resource DLL</td><td>10.0.19541.1000</td><td>C:\Windows\system32\odbcint.dll</td></tr>
            <tr><td>Unicode Cursor Library</td><td>10.0.19541.1000</td><td>C:\Windows\system32\odbccu32.dll</td></tr>
          </tbody>
        </table>
      </div>
      <div class="odbc-note d-flex align-items-start">
        <svg width="32" height="34"><use href="#d-odbc"/></svg>
        <p class="mb-0">ODBC is a programming interface that enables applications to access data in database management systems that use Structured Query Language (SQL) as a data access standard.</p>
      </div>
    </div>
    <div class="odbc-foot d-flex justify-content-end">
      <button class="primary">OK</button><button>Cancel</button><button disabled>Apply</button><button>Help</button>
    </div>
  </div>
</section>

<!-- Taskbar -->
<footer class="tbar d-flex align-items-stretch position-relative">
  <button class="plain start" aria-label="Start"><svg width="16" height="16"><path d="M0 2.300 6.800 1.300v6.200H0zM7.700 1.200 16 0v7.500H7.700zM0 8.400h6.800v6.300L0 13.700zM7.700 8.400H16V16l-8.300-1.200z" fill="#fff"/></svg></button>
  <label class="seek d-flex align-items-center"><svg width="17" height="18"><circle cx="10.500" cy="6.500" r="5.500" fill="none" stroke="#222" stroke-width="1.300"/><path d="M7 11 1 17" stroke="#222" stroke-width="1.400"/></svg><input type="search" placeholder="Type here to search" aria-label="Type here to search"></label>
  <button class="plain app" aria-label="Cortana"><svg width="16" height="16"><circle cx="8" cy="8" r="6.800" fill="none" stroke="#fff" stroke-width="1.900"/></svg></button>
  <button class="plain app" aria-label="Task View"><svg width="17" height="16"><path d="M.5 0v3h10V0M.500 16v-3h10v3M.500 5.500h10v5H.500z" fill="none" stroke="#fff" stroke-width="1.100"/><path d="M14.500 0v3.500M14.500 8v8" stroke="#fff" stroke-width="1.200"/><path d="M13.500 4.500h2.500v3h-2.500z" fill="#fff"/></svg></button>
  <button class="plain app" aria-label="Edge"><svg width="20" height="22"><path d="M0 10.500C1 4 5 0 10.500 0 17 0 20 5 20 10v2.500H6.500c.3 4 3 5.300 6 5.300 2.500 0 4.500-.8 6-1.800v4.300C16.500 21.500 14 22 11.500 22 5 22 2 17.500 2 13.500c0-3.500 2-6.500 5-8C4 6 1.500 7.500 0 10.500zM6.700 8.800h7.600c0-2.500-1.300-4-3.700-4S7 6.500 6.700 8.800z" fill="#0a7bdc" fill-rule="evenodd"/></svg></button>
  <button class="plain app" aria-label="File Explorer"><svg width="22" height="18"><path d="M0 0h8l2 2h12v16H0z" fill="#e5a921"/><path d="M0 4h22v14H0z" fill="#fbdc78"/><path d="M3 18V10h16v8h-4v-3.500H7V18z" fill="#4aa0e2"/></svg></button>
  <button class="plain app" aria-label="Store"><svg width="24" height="24"><path d="M8 7V4.500a4 4 0 0 1 8 0V7" fill="none" stroke="#fff" stroke-width="1.300"/><path d="M1 6h22v15.500a2 2 0 0 1-2 2H3a2 2 0 0 1-2-2z" fill="#fff"/><path d="M6 9h5.500v5.500H6z" fill="#f25022"/><path d="M12.500 9H18v5.500h-5.500z" fill="#7fba00"/><path d="M6 15.500h5.500V21H6z" fill="#00a4ef"/><path d="M12.500 15.500H18V21h-5.500z" fill="#ffb900"/></svg></button>
  <button class="plain app" aria-label="Mail"><svg width="24" height="20"><path d="M0 8 12 0l12 8v12H0z" fill="#fff"/><path d="M2.500 8h19L15 12.500l1.500 4z" fill="#20323f"/></svg></button>
  <button class="plain app open" aria-label="Control Panel"><svg width="20" height="16" viewBox="0 0 16 12"><use href="#i-cp"/></svg></button>
  <button class="plain app open front" aria-label="ODBC Data Source Administrator"><svg width="24" height="24"><rect x="4" y=".5" width="19" height="19" fill="#f3f5f9" stroke="#9fb0cf"/><path d="M4 2h19" stroke="#6d8fd0" stroke-width="3"/><path d="M6 7h15M6 10h15M6 13h15" stroke="#7b8bb5" stroke-dasharray="3 2" stroke-width="1.500"/><path d="M0 13l9-4 10 3v6l-7 6-10-3z" fill="#8c9297"/><path d="M0 13l9-4 10 3-8 4z" fill="#d0d4d7"/><path d="M6 12q3-5 8-1" fill="none" stroke="#4a5055" stroke-width="1.500"/></svg></button>
  <div class="brand d-flex align-items-center">
    <svg width="52" height="40"><path d="M15 0h34l-1 3-14 19q-18-1-29 0Q1 19 15 0z" fill="#b9bcc6"/><path d="M22 2q8 0 16 2l-2 3q-8-2-16-2z" fill="#17263f"/><path d="M5 19q-5 3-1 8l25 9 21-28-1 8-18 23Q14 36 3 31q-5-6 2-12z" fill="#b9bcc6"/></svg>
    <span>The Collection Book</span>
  </div>
  <div class="tray d-flex align-items-center ms-auto">
    <button class="plain" aria-label="Hidden icons"><svg width="14" height="8"><path d="M1 7l6-6 6 6" fill="none" stroke="#fff" stroke-width="1.300"/></svg></button>
    <svg width="18" height="11"><path d="M3.500 11A3 3 0 0 1 3 5.500 5 5 0 0 1 11.500 3 3.500 3.500 0 0 1 15 6a2.600 2.600 0 0 1 0 5z" fill="#fff"/></svg>
    <svg width="16" height="14"><path d="M4.500 2.500h11v7h-11zM9.500 9.500v3M6 13h8M.5 1.500h4v4h-4zM2.500 5.500v5h2" fill="none" stroke="#fff" stroke-width="1.100"/></svg>
    <svg width="17" height="14"><path d="M1 5h2.500L7 1.500v11L3.500 9H1z" fill="none" stroke="#fff" stroke-width="1.100"/><path d="M9 5q1.200 2 0 4M11.500 3q2.500 4 0 8M14 1q4 6 0 12" fill="none" stroke="#fff" stroke-width="1.100"/></svg>
    <div class="clock text-center">10:47 PM<br>1/2/2020</div>
    <button class="plain" aria-label="Notifications"><svg width="16" height="16"><path d="M.5 1.500h15v10H10L8 14.500 6 11.500H.5z" fill="none" stroke="#fff" stroke-width="1.200"/></svg></button>
    <span class="peek"></span>
  </div>
</footer>
</body>
</html>
